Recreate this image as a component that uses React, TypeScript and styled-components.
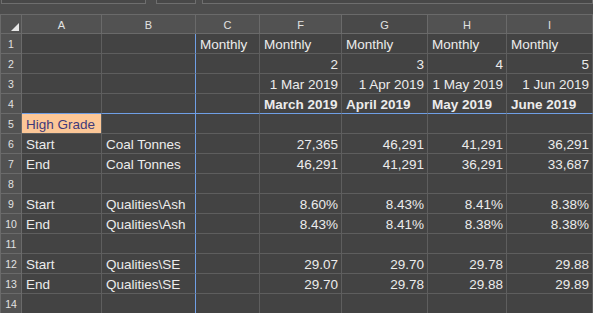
import React from "react";
import styled, { createGlobalStyle, css } from "styled-components";

const Global = createGlobalStyle`
  html, body { margin: 0; padding: 0; background: #4d4d4d; }
  body { width: 593px; height: 313px; overflow: hidden; }
  #root { width: 593px; height: 313px; overflow: hidden; }
`;

const FONT = `"Liberation Sans", Arial, sans-serif`;

const Page = styled.div`
  width: 593px;
  height: 313px;
  background: #4d4d4d;
  display: flex;
  flex-direction: column;
  overflow: hidden;
  font-family: ${FONT};
`;

const TopBar = styled.div`
  height: 14px;
  flex: none;
  display: flex;
  align-items: flex-start;
  padding-left: 1px;
  box-sizing: border-box;
`;

const Field = styled.div<{ $w?: number; $ml?: number; $grow?: boolean }>`
  height: 4px;
  box-sizing: border-box;
  border: 1px solid #6e6e6e;
  border-top: none;
  background: #484848;
  margin-left: ${(p) => p.$ml ?? 0}px;
  ${(p) => (p.$grow ? css`flex: 1;` : css`width: ${p.$w}px;`)}
`;

const Sheet = styled.div`
  display: grid;
  grid-template-columns: 22px 80px 94px 64px 82px 86px 79px 1fr;
  grid-auto-rows: 20px;
  padding-left: 1px;
  margin-left: -1px;
`;

const HeadCell = styled.div<{ $dark?: boolean; $first?: boolean }>`
  box-sizing: border-box;
  background: ${(p) => (p.$dark ? "#494949" : "#525252")};
  border-top: 1px solid #6a6a6a;
  border-right: 1px solid #6a6a6a;
  border-bottom: 1px solid #6a6a6a;
  ${(p) => p.$first && css`border-left: 1px solid #6a6a6a;`}
  color: #e2e2e2;
  font-size: 11px;
  display: flex;
  align-items: center;
  justify-content: center;
  position: relative;
  padding-top: 1px;
`;

const RowHead = styled.div`
  box-sizing: border-box;
  background: #525252;
  border-left: 1px solid #6a6a6a;
  border-right: 1px solid #6a6a6a;
  border-bottom: 1px solid #6a6a6a;
  color: #e2e2e2;
  font-size: 10.5px;
  display: flex;
  align-items: center;
  justify-content: center;
`;

const Cell = styled.div<{
  $align?: "left" | "right";
  $bold?: boolean;
  $freezeRight?: boolean;
  $freezeBottom?: boolean;
  $hl?: boolean;
}>`
  box-sizing: border-box;
  background: ${(p) => (p.$hl ? "#fcc797" : "#434343")};
  border-right: 1px solid ${(p) => (p.$freezeRight ? "#6f9fe6" : "#5e5e5e")};
  border-bottom: 1px solid ${(p) => (p.$freezeBottom ? "#6f9fe6" : "#5e5e5e")};
  color: ${(p) => (p.$hl ? "#3f3a7a" : "#ececec")};
  font-size: 13.5px;
  font-weight: ${(p) => (p.$bold ? 700 : 400)};
  line-height: 16px;
  white-space: nowrap;
  overflow: visible;
  display: flex;
  align-items: flex-end;
  justify-content: ${(p) => (p.$align === "right" ? "flex-end" : "flex-start")};
  padding: 0 3px 0 4px;
`;

const Corner = styled.svg`
  position: absolute;
  right: 2px;
  bottom: 2px;
`;

type Row = { cells: string[]; align?: "left" | "right"; bold?: boolean };

const cols = ["A", "B", "C", "F", "G", "H", "I"];

const rows: Row[] = [
  { cells: ["", "", "Monthly", "Monthly", "Monthly", "Monthly", "Monthly"] },
  { cells: ["", "", "", "2", "3", "4", "5"], align: "right" },
  { cells: ["", "", "", "1 Mar 2019", "1 Apr 2019", "1 May 2019", "1 Jun 2019"], align: "right" },
  { cells: ["", "", "", "March 2019", "April 2019", "May 2019", "June 2019"], bold: true },
  { cells: ["High Grade", "", "", "", "", "", ""] },
  { cells: ["Start", "Coal Tonnes", "", "27,365", "46,291", "41,291", "36,291"], align: "right" },
  { cells: ["End", "Coal Tonnes", "", "46,291", "41,291", "36,291", "33,687"], align: "right" },
  { cells: ["", "", "", "", "", "", ""] },
  { cells: ["Start", "Qualities\\Ash", "", "8.60%", "8.43%", "8.41%", "8.38%"], align: "right" },
  { cells: ["End", "Qualities\\Ash", "", "8.43%", "8.41%", "8.38%", "8.38%"], align: "right" },
  { cells: ["", "", "", "", "", "", ""] },
  { cells: ["Start", "Qualities\\SE", "", "29.07", "29.70", "29.78", "29.88"], align: "right" },
  { cells: ["End", "Qualities\\SE", "", "29.70", "29.78", "29.88", "29.89"], align: "right" },
  { cells: ["", "", "", "", "", "", ""] },
];

export default function App() {
  return (
    <>
      <Global />
      <Page>
        <TopBar>
          <Field $w={145} />
          <Field $w={40} $ml={10} />
          <Field $grow $ml={6} />
        </TopBar>
        <Sheet>
          <HeadCell $first>
            <Corner width="8" height="8" viewBox="0 0 8 8">
              <polygon points="0,8 8,0 8,8" fill="#e6e6e6" />
            </Corner>
          </HeadCell>
          {cols.map((c) => (
            <HeadCell key={c} $dark={c === "G"}>
              {c}
            </HeadCell>
          ))}
          {rows.map((r, ri) => (
            <React.Fragment key={ri}>
              <RowHead>{ri + 1}</RowHead>
              {r.cells.map((v, ci) => (
                <Cell
                  key={ci}
                  $align={ci < 2 ? "left" : r.align}
                  $bold={r.bold}
                  $freezeRight={ci === 1}
                  $freezeBottom={ri === 3}
                  $hl={ri === 4 && ci === 0}
                >
                  {v}
                </Cell>
              ))}
            </React.Fragment>
          ))}
        </Sheet>
      </Page>
    </>
  );
}
